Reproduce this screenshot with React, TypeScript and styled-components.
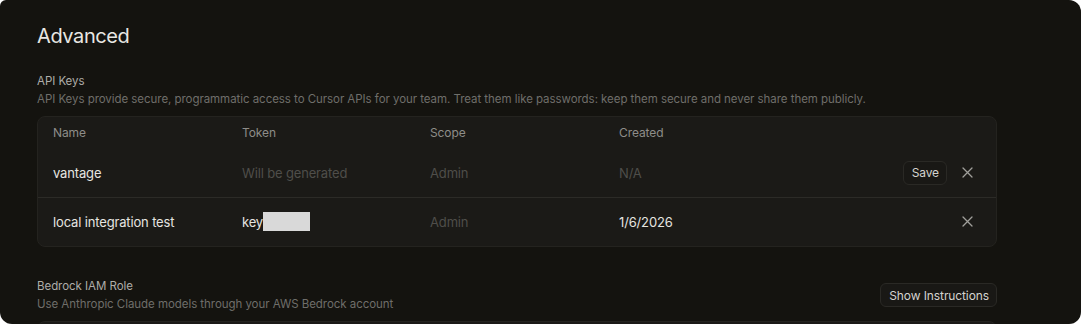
import React from 'react';
import styled, { createGlobalStyle } from 'styled-components';

const GlobalStyle = createGlobalStyle`
  html, body {
    margin: 0;
    padding: 0;
    background: #ffffff;
  }
  body {
    font-family: Inter, 'Noto Sans', sans-serif;
    -webkit-font-smoothing: antialiased;
  }
`;

type KeyRow = {
  name: string;
  token: string;
  pending?: boolean;
  scope: string;
  created: string;
};

const rows: KeyRow[] = [
  { name: 'vantage', token: 'Will be generated', pending: true, scope: 'Admin', created: 'N/A' },
  { name: 'local integration test', token: 'key', scope: 'Admin', created: '1/6/2026' },
];

const CloseIcon = () => (
  <svg width='11' height='11' viewBox='0 0 11 11' fill='none'>
    <path d='M1 1L10 10M10 1L1 10' stroke='#a09f9b' strokeWidth='1.3' strokeLinecap='round' />
  </svg>
);

const App = () => {
  return (
    <>
      <GlobalStyle />
      <Panel>
        <Title>Advanced</Title>

        <Section>
          <SectionHead>
            <div>
              <Label>API Keys</Label>
              <Hint>
                API Keys provide secure, programmatic access to Cursor APIs for your team. Treat them
                like passwords: keep them secure and never share them publicly.
              </Hint>
            </div>
          </SectionHead>

          <Table>
            <HeaderRow>
              <HeadCell>Name</HeadCell>
              <HeadCell>Token</HeadCell>
              <HeadCell>Scope</HeadCell>
              <HeadCell>Created</HeadCell>
              <span />
            </HeaderRow>
            {rows.map((r, i) => (
              <Row key={r.name} $divider={i > 0}>
                <Cell>{r.name}</Cell>
                <Cell $muted={r.pending}>
                  {r.token}
                  {!r.pending && <Redacted />}
                </Cell>
                <Cell $muted>{r.scope}</Cell>
                <Cell $muted={r.pending}>{r.created}</Cell>
                <Actions>
                  {r.pending && <SmallButton>Save</SmallButton>}
                  <IconButton aria-label='Remove'>
                    <CloseIcon />
                  </IconButton>
                </Actions>
              </Row>
            ))}
          </Table>
        </Section>

        <Section>
          <SectionHead>
            <div>
              <Label>Bedrock IAM Role</Label>
              <Hint>Use Anthropic Claude models through your AWS Bedrock account</Hint>
            </div>
            <SmallButton>Show Instructions</SmallButton>
          </SectionHead>
          <NextBox />
        </Section>
      </Panel>
    </>
  );
};

export default App;

const Panel = styled.div`
  box-sizing: border-box;
  width: 1081px;
  height: 324px;
  overflow: hidden;
  background: #14130f;
  border-radius: 6px 12px 12px 12px;
  padding: 22px 84px 0 37px;
`;

const Title = styled.h1`
  margin: 0;
  font-size: 20px;
  font-weight: 400;
  line-height: 28px;
  color: #e8e7e3;
  letter-spacing: -0.4px;
`;

const Section = styled.section`
  margin-top: 22px;
  & + & {
    margin-top: 30px;
  }
`;

const SectionHead = styled.div`
  display: flex;
  align-items: center;
  justify-content: space-between;
  margin-bottom: 8px;
`;

const Label = styled.div`
  font-size: 11.5px;
  line-height: 18px;
  color: #aeada9;
  letter-spacing: -0.05px;
`;

const Hint = styled.div`
  font-size: 11.5px;
  line-height: 18px;
  color: #6f6e6a;
  letter-spacing: -0.05px;
`;

const Table = styled.div`
  background: #1b1a17;
  border: 1px solid #24231f;
  border-radius: 8px;
`;

const gridCols = `189px 188px 189px 189px 1fr`;

const HeaderRow = styled.div`
  display: grid;
  grid-template-columns: ${gridCols};
  align-items: center;
  height: 31px;
  padding: 0 16px 0 15px;
`;

const HeadCell = styled.div`
  font-size: 12px;
  color: #8e8d89;
  letter-spacing: -0.1px;
`;

const Row = styled.div<{ $divider?: boolean }>`
  display: grid;
  grid-template-columns: ${gridCols};
  align-items: center;
  height: ${p => (p.$divider ? 47 : 49)}px;
  padding: 0 16px 0 15px;
  border-top: ${p => (p.$divider ? '1px solid #2c2b27' : 'none')};
  & + & {
    padding-bottom: 1px;
  }
`;

const Cell = styled.div<{ $muted?: boolean }>`
  display: flex;
  align-items: center;
  font-size: 13px;
  letter-spacing: -0.15px;
  color: ${p => (p.$muted ? '#4f4e4a' : '#e6e5e1')};
  white-space: nowrap;
`;

const Redacted = styled.span`
  display: inline-block;
  width: 47px;
  height: 19px;
  background: #d9d9d9;
`;

const Actions = styled.div`
  display: flex;
  align-items: center;
  justify-content: flex-end;
  gap: 12px;
`;

const SmallButton = styled.button`
  font-family: inherit;
  font-size: 12px;
  letter-spacing: -0.1px;
  color: #d4d3cf;
  background: #191815;
  border: 1px solid #2a2925;
  border-radius: 6px;
  height: 24px;
  padding: 0 7px 0 8px;
  cursor: pointer;
`;

const IconButton = styled.button`
  display: flex;
  align-items: center;
  justify-content: center;
  width: 16px;
  height: 16px;
  padding: 0;
  margin-right: 5px;
  background: none;
  border: none;
  cursor: pointer;
`;

const NextBox = styled.div`
  height: 40px;
  background: #1b1a17;
  border: 1px solid #24231f;
  border-radius: 8px;
`;
